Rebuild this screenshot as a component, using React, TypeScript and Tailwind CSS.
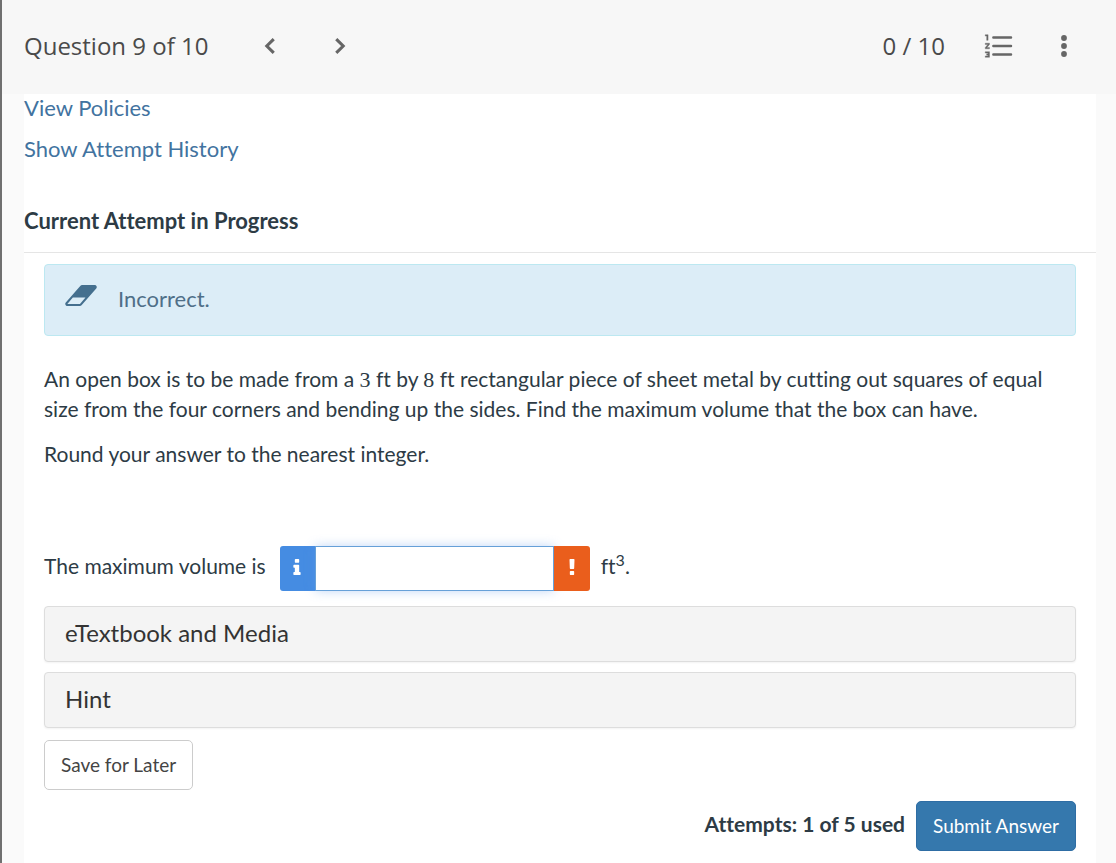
import type { ReactNode } from "react";

function Chevron({ direction }: { direction: "left" | "right" }) {
  return (
    <svg viewBox="0 0 24 24" className="size-8" fill="none" stroke="currentColor" strokeWidth={2.3} aria-hidden="true">
      <path d={direction === "left" ? "M14.800 6.800L9.600 12l5.200 5.200" : "M9.200 6.800l5.200 5.200l-5.200 5.200"} />
    </svg>
  );
}

function NumberedListIcon() {
  return (
    <svg viewBox="0 0 24 24" className="size-[34px]" fill="currentColor" stroke="currentColor" aria-hidden="true">
      <path d="M8 6h12.500M8 12h12.500M8 18h12.500" fill="none" strokeWidth={1.7} strokeLinecap="round" />
      <path
        strokeWidth={0.25}
        d="M2.300 17h2v.5H3.300v1h1v.5H2.300v1h3v-4H2.300v1zm1-9h1V4H2.300v1h1v3zm-1 3h1.800L2.300 13.100v.9h3v-1H3.500L5.300 10.900V10H2.300v1z"
      />
    </svg>
  );
}

function MoreIcon() {
  return (
    <svg viewBox="0 0 32 32" className="size-8 fill-current" aria-hidden="true">
      <circle cx="16" cy="8" r="2.900" />
      <circle cx="16" cy="16" r="2.900" />
      <circle cx="16" cy="24" r="2.900" />
    </svg>
  );
}

function EraserIcon() {
  return (
    <svg viewBox="0 256 1920 1280" className="h-[21px] w-8 fill-current" aria-hidden="true">
      <path d="M896 1408l336-384h-768l-336 384h768zm1013-1077q15 34 9.500 71.500t-30.500 65.500l-896 1024q-38 44-96 44h-768q-38 0-69.500-20.500t-47.500-54.500q-15-34-9.500-71.500t30.500-65.500l896-1024q38-44 96-44h768q38 0 69.500 20.500t47.500 54.500z" />
    </svg>
  );
}

function InfoIcon() {
  return (
    <svg viewBox="576 128 640 1408" className="h-4 w-2 fill-current" aria-hidden="true">
      <path d="M1216 1344v128q0 26-19 45t-45 19h-512q-26 0-45-19t-19-45v-128q0-26 19-45t45-19h64v-384h-64q-26 0-45-19t-19-45v-128q0-26 19-45t45-19h384q26 0 45 19t19 45v576h64q26 0 45 19t19 45zm-128-1152v192q0 26-19 45t-45 19h-256q-26 0-45-19t-19-45v-192q0-26 19-45t45-19h256q26 0 45 19t19 45z" />
    </svg>
  );
}

function ExclamationIcon() {
  return (
    <svg viewBox="544 128 640 1424" className="h-4 w-2 fill-current" aria-hidden="true">
      <path d="M1056 1264v224q0 26-19 45t-45 19h-256q-26 0-45-19t-19-45v-224q0-26 19-45t45-19h256q26 0 45 19t19 45zm30-1072l-28 768q-1 26-20.500 45t-45.500 19h-256q-26 0-45.500-19t-20.500-45l-28-768q-1-26 17.500-45t44.500-19h320q26 0 44.500 19t17.500 45z" />
    </svg>
  );
}

function Num({ children }: { children: ReactNode }) {
  return <span className="font-['Liberation_Serif',serif] text-[22px] leading-none">{children}</span>;
}

function Panel({ title }: { title: string }) {
  return (
    <button
      type="button"
      className="flex h-14 w-full items-center rounded border border-[#dddddd] bg-[#f4f4f4] px-5 pb-0.5 text-left text-2xl text-[#333333] shadow-xs"
    >
      {title}
    </button>
  );
}

export default function App() {
  return (
    <div className="min-h-screen border-l-2 border-[#707070] bg-[#fafafa] font-['Lato',sans-serif] text-[21px] leading-[30px] text-[#2d3b45] [font-variant-ligatures:none]">
      <header className="flex h-[94px] items-center justify-between bg-[#f7f7f7] pr-9 pb-0.5 pl-[22px] font-['Open_Sans',sans-serif] text-2xl text-[#4a4a4a]">
        <div className="flex items-center">
          <h1>Question 9 of 10</h1>
          <nav className="ml-[46px] flex gap-[38px] text-[#666666]">
            <button type="button" aria-label="Previous question">
              <Chevron direction="left" />
            </button>
            <button type="button" aria-label="Next question">
              <Chevron direction="right" />
            </button>
          </nav>
        </div>
        <div className="flex items-center">
          <span>0 / 10</span>
          <button type="button" aria-label="Question list" className="ml-[37px] text-[#666666]">
            <NumberedListIcon />
          </button>
          <button type="button" aria-label="More options" className="ml-8 text-[#666666]">
            <MoreIcon />
          </button>
        </div>
      </header>

      <main className="mr-5 ml-[22px] min-h-[769px] bg-white pb-3">
        <div className="flex flex-col items-start gap-[13px] text-[22px] leading-7 text-[#4273a0]">
          <a href="#policies">View Policies</a>
          <a href="#history">Show Attempt History</a>
        </div>

        <h2 className="mt-[43px] border-b border-[#e5e5e5] pb-4 text-[22px] leading-[30px] font-bold">
          Current Attempt in Progress
        </h2>

        <div className="px-5 pt-[11px]">
          <div
            role="alert"
            className="flex h-[72px] items-center gap-[21px] rounded border border-[#bce8f1] bg-[#dcedf7] px-5 pb-0.5 text-[22px] text-[#4f6f88]"
          >
            <span className="pb-2 text-[#446f8e]">
              <EraserIcon />
            </span>
            <span>Incorrect.</span>
          </div>

          <div className="mt-7 flex flex-col gap-[15px]">
            <p>
              An open box is to be made from a <Num>3</Num> ft by <Num>8</Num> ft rectangular piece of sheet metal by
              cutting out squares of equal size from the four corners and bending up the sides. Find the maximum volume
              that the box can have.
            </p>
            <p>Round your answer to the nearest integer.</p>
          </div>

          <div className="mt-[77px] flex items-center">
            <label htmlFor="volume" className="pb-1.5">
              The maximum volume is
            </label>
            <div className="ml-3.5 flex h-[45px] w-[310px]">
              <button
                type="button"
                aria-label="Answer information"
                className="flex w-[35px] items-center justify-center rounded-l-[3px] bg-[#458ce2] pb-1 text-white"
              >
                <InfoIcon />
              </button>
              <input
                id="volume"
                type="text"
                className="min-w-0 flex-1 border border-[#66a0d8] bg-white px-3 shadow-[0_0_10px_rgba(100,155,235,0.4)] outline-none"
              />
              <span className="flex w-9 items-center justify-center rounded-r-[3px] bg-[#ea5e1c] pb-1 text-white">
                <ExclamationIcon />
              </span>
            </div>
            <span className="ml-[11px] pb-1.5">
              ft<sup className="-top-2 text-base">3</sup>.
            </span>
          </div>

          <div className="mt-[15px] flex flex-col gap-[10px]">
            <Panel title="eTextbook and Media" />
            <Panel title="Hint" />
          </div>

          <button
            type="button"
            className="mt-3 block h-[50px] rounded-[5px] border border-[#cccccc] bg-white px-4 text-[19px] text-[#444444]"
          >
            Save for Later
          </button>

          <div className="mt-[11px] flex items-center justify-end gap-[11px]">
            <span className="pb-1 font-bold">Attempts: 1 of 5 used</span>
            <button
              type="button"
              className="h-[50px] rounded-[5px] border border-[#2e6da4] bg-[#3578ad] px-4 text-[19px] text-white"
            >
              Submit Answer
            </button>
          </div>
        </div>
      </main>
    </div>
  );
}
